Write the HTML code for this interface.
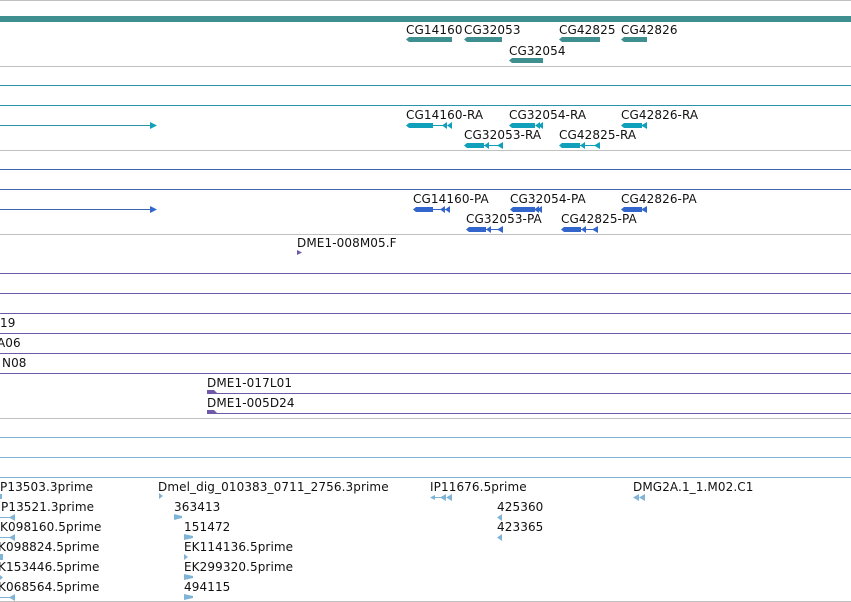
<!DOCTYPE html>
<html><head><style>
html,body{margin:0;padding:0;background:#fff;width:851px;height:602px;overflow:hidden}
svg{display:block}
text{font-family:"DejaVu Sans","Liberation Sans",sans-serif;font-size:12px;fill:#111;letter-spacing:0.1px}
</style></head><body>
<svg width="851" height="602" viewBox="0 0 851 602">
<g stroke-width="1" shape-rendering="crispEdges">
<line x1="0" y1="0.5" x2="851" y2="0.5" stroke="#c0c0c0"/>
<line x1="0" y1="66.5" x2="851" y2="66.5" stroke="#c0c0c0"/>
<line x1="0" y1="85.5" x2="851" y2="85.5" stroke="#2a93a8"/>
<line x1="0" y1="105.5" x2="851" y2="105.5" stroke="#2a93a8"/>
<line x1="0" y1="150.5" x2="851" y2="150.5" stroke="#c0c0c0"/>
<line x1="0" y1="169.5" x2="851" y2="169.5" stroke="#3d68b0"/>
<line x1="0" y1="189.5" x2="851" y2="189.5" stroke="#3d68b0"/>
<line x1="0" y1="234.5" x2="851" y2="234.5" stroke="#c0c0c0"/>
<line x1="0" y1="273.5" x2="851" y2="273.5" stroke="#7059a8"/>
<line x1="0" y1="293.5" x2="851" y2="293.5" stroke="#7059a8"/>
<line x1="0" y1="313.5" x2="851" y2="313.5" stroke="#7059a8"/>
<line x1="0" y1="333.5" x2="851" y2="333.5" stroke="#7059a8"/>
<line x1="0" y1="353.5" x2="851" y2="353.5" stroke="#7059a8"/>
<line x1="0" y1="373.5" x2="851" y2="373.5" stroke="#7059a8"/>
<line x1="207" y1="393.5" x2="851" y2="393.5" stroke="#7059a8"/>
<line x1="207" y1="413.5" x2="851" y2="413.5" stroke="#7059a8"/>
<line x1="0" y1="418.5" x2="851" y2="418.5" stroke="#c0c0c0"/>
<line x1="0" y1="437.5" x2="851" y2="437.5" stroke="#80b4d6"/>
<line x1="0" y1="457.5" x2="851" y2="457.5" stroke="#80b4d6"/>
<line x1="0" y1="477.5" x2="851" y2="477.5" stroke="#80b4d6"/>
<line x1="0" y1="601.5" x2="851" y2="601.5" stroke="#c0c0c0"/>
<line x1="0" y1="125.5" x2="151" y2="125.5" stroke="#2a93a8"/>
<line x1="0" y1="209.5" x2="151" y2="209.5" stroke="#3d68b0"/>
</g>
<rect x="0" y="16" width="851" height="6" fill="#3f8f90"/>
<polygon points="150,122 157,125.5 150,129" fill="#10a0bc"/>
<polygon points="150,206 157,209.5 150,213" fill="#3366cc"/>

<g fill="#3f8f90">
<polygon points="409,37 452,37 452,42 409,42 406,39.5"/>
<polygon points="467,37 502,37 502,42 467,42 464,39.5"/>
<polygon points="562,37 600,37 600,42 562,42 559,39.5"/>
<polygon points="624,37 647,37 647,42 624,42 621,39.5"/>
<polygon points="512,58 543,58 543,63 512,63 509,60.5"/>
</g>
<text x="406" y="34">CG14160</text><text x="464" y="34">CG32053</text>
<text x="559" y="34">CG42825</text><text x="621" y="34">CG42826</text>
<text x="509" y="55">CG32054</text>

<g fill="#10a0bc" stroke="#10a0bc">
<polygon points="409,123 433,123 433,128 409,128 406,125.5" stroke="none"/>
<line x1="433" y1="125.5" x2="447" y2="125.5"/>
<polygon points="442,125.5 447,122 447,129" stroke="none"/><polygon points="447,125.5 452,122 452,129" stroke="none"/>
<polygon points="512,123 535,123 535,128 512,128 509,125.5" stroke="none"/>
<polygon points="535,125.5 540,122 540,129" stroke="none"/><polygon points="538,125.5 543,122 543,129" stroke="none"/>
<polygon points="624,123 642,123 642,128 624,128 621,125.5" stroke="none"/>
<polygon points="641,125.5 647,122 647,129" stroke="none"/>
<polygon points="467,143 484,143 484,148 467,148 464,145.5" stroke="none"/>
<line x1="484" y1="145.5" x2="499" y2="145.5"/>
<polygon points="484,145.5 489,142 489,149" stroke="none"/><polygon points="497,145.5 503,142 503,149" stroke="none"/>
<polygon points="562,143 580,143 580,148 562,148 559,145.5" stroke="none"/>
<line x1="580" y1="145.5" x2="596" y2="145.5"/>
<polygon points="580,145.5 585,142 585,149" stroke="none"/><polygon points="594,145.5 600,142 600,149" stroke="none"/>
</g>
<text x="406" y="119">CG14160-RA</text><text x="509" y="119">CG32054-RA</text><text x="621" y="119">CG42826-RA</text>
<text x="464" y="139">CG32053-RA</text><text x="559" y="139">CG42825-RA</text>

<g fill="#3366cc" stroke="#3366cc">
<polygon points="416,207 433,207 433,212 416,212 413,209.5" stroke="none"/>
<line x1="433" y1="209.5" x2="446" y2="209.5"/>
<polygon points="440,209.5 445,206 445,213" stroke="none"/><polygon points="445,209.5 450,206 450,213" stroke="none"/>
<polygon points="513,207 535,207 535,212 513,212 510,209.5" stroke="none"/>
<polygon points="534,209.5 539,206 539,213" stroke="none"/><polygon points="537,209.5 542,206 542,213" stroke="none"/>
<polygon points="624,207 642,207 642,212 624,212 621,209.5" stroke="none"/>
<polygon points="641,209.5 647,206 647,213" stroke="none"/>
<polygon points="469,227 486,227 486,232 469,232 466,229.5" stroke="none"/>
<line x1="486" y1="229.5" x2="499" y2="229.5"/>
<polygon points="486,229.5 491,226 491,233" stroke="none"/><polygon points="497,229.5 503,226 503,233" stroke="none"/>
<polygon points="564,227 581,227 581,232 564,232 561,229.5" stroke="none"/>
<line x1="581" y1="229.5" x2="594" y2="229.5"/>
<polygon points="581,229.5 586,226 586,233" stroke="none"/><polygon points="592,229.5 598,226 598,233" stroke="none"/>
</g>
<text x="413" y="203">CG14160-PA</text><text x="510" y="203">CG32054-PA</text><text x="621" y="203">CG42826-PA</text>
<text x="466" y="223">CG32053-PA</text><text x="561" y="223">CG42825-PA</text>

<g fill="#7059a8">
<polygon points="297,250 302,252.5 297,255"/>
<polygon points="207,390 214,390 217,393 207,393"/>
<polygon points="207,410 214,410 217,413 207,413"/>
</g>
<text x="297" y="247">DME1-008M05.F</text>
<text x="0" y="327">19</text>
<text x="-3" y="347">A06</text>
<text x="2" y="367">N08</text>
<text x="207" y="387">DME1-017L01</text>
<text x="207" y="407">DME1-005D24</text>

<g fill="#80b4d6" stroke="#80b4d6">
<rect x="0" y="494" width="2" height="5" stroke="none"/>
<line x1="0" y1="517.5" x2="14" y2="517.5"/><polygon points="9,517.5 15,514 15,521" stroke="none"/>
<line x1="0" y1="537.5" x2="14" y2="537.5"/><polygon points="9,537.5 15,534 15,541" stroke="none"/>
<rect x="0" y="554" width="3" height="6" stroke="none"/>
<polygon points="0,575 3,577.5 0,580" stroke="none"/>
<line x1="0" y1="597.5" x2="14" y2="597.5"/><polygon points="9,597.5 15,594 15,601" stroke="none"/>
<polygon points="159,493 163,496 159,499" stroke="none"/>
<polygon points="174,514 182,516 182,518 174,520" stroke="none"/>
<polygon points="184,534 193,536 193,538 184,540" stroke="none"/>
<polygon points="184,554 188,557 184,560" stroke="none"/>
<polygon points="184,574 193,576 193,578 184,580" stroke="none"/>
<polygon points="184,594 193,596 193,598 184,600" stroke="none"/>
<line x1="431" y1="497.5" x2="442" y2="497.5"/>
<polygon points="430,497.5 435,495 435,500" stroke="none"/><polygon points="440,497.5 446,494 446,501" stroke="none"/><polygon points="446,497.5 452,494 452,501" stroke="none"/>
<polygon points="633,497.5 639,494 639,501" stroke="none"/><polygon points="639,497.5 645,494 645,501" stroke="none"/>
<polygon points="497,517.5 502,514 502,521" stroke="none"/>
<polygon points="497,537.5 502,534 502,541" stroke="none"/>
</g>
<text x="0" y="491">P13503.3prime</text>
<text x="1" y="511">P13521.3prime</text>
<text x="0" y="531">K098160.5prime</text>
<text x="-2" y="551">K098824.5prime</text>
<text x="-2" y="571">K153446.5prime</text>
<text x="-2" y="591">K068564.5prime</text>
<text x="158" y="491">Dmel_dig_010383_0711_2756.3prime</text>
<text x="174" y="511">363413</text>
<text x="184" y="531">151472</text>
<text x="184" y="551">EK114136.5prime</text>
<text x="184" y="571">EK299320.5prime</text>
<text x="184" y="591">494115</text>
<text x="430" y="491">IP11676.5prime</text>
<text x="497" y="511">425360</text>
<text x="497" y="531">423365</text>
<text x="633" y="491">DMG2A.1_1.M02.C1</text>
</svg>
</body></html>
